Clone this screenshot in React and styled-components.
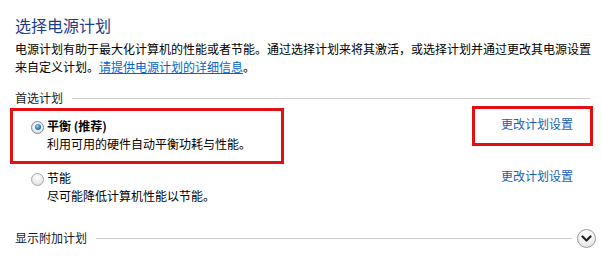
import React from 'react'
import styled, { createGlobalStyle } from 'styled-components'

const GlobalStyle = createGlobalStyle`
  html, body {
    margin: 0;
    background: #ffffff;
  }
  body {
    font-family: "Noto Sans CJK SC", "Noto Sans", sans-serif;
    font-size: 12px;
    color: #000000;
  }
`

const plans = [
  { key: 'balanced', name: '平衡 (推荐)', desc: '利用可用的硬件自动平衡功耗与性能。', selected: true, marked: true },
  { key: 'saver', name: '节能', desc: '尽可能降低计算机性能以节能。', selected: false, marked: false },
]

const App = () => {
  return (
    <Page>
      <GlobalStyle />
      <Title>选择电源计划</Title>
      <Intro>
        电源计划有助于最大化计算机的性能或者节能。通过选择计划来将其激活，或选择计划并通过更改其电源设置来自定义计划。<Link href="#" onClick={e => e.preventDefault()}>请提供电源计划的详细信息</Link>。
      </Intro>

      <GroupHeader>
        <span>首选计划</span>
        <Rule />
      </GroupHeader>

      <PlanList>
        {plans.map(plan => (
          <PlanRow key={plan.key}>
            <Option $marked={plan.marked}>
              <Radio $checked={plan.selected} />
              <PlanName $bold={plan.selected}>{plan.name}</PlanName>
              <PlanDesc>{plan.desc}</PlanDesc>
            </Option>
            <SettingsCell $marked={plan.marked}>
              <PlainLink href="#" onClick={e => e.preventDefault()}>更改计划设置</PlainLink>
            </SettingsCell>
          </PlanRow>
        ))}
      </PlanList>

      <Footer>
        <span>显示附加计划</span>
        <Rule />
        <ExpandButton aria-label="展开">
          <svg width="11" height="8" viewBox="0 0 11 8">
            <path d="M1.5 1.5 L5.5 5.5 L9.5 1.5" fill="none" stroke="#1f1f1f" strokeWidth="2.2" strokeLinecap="round" strokeLinejoin="round" />
          </svg>
        </ExpandButton>
      </Footer>
    </Page>
  )
}

const Page = styled.div`
  width: 602px;
  box-sizing: border-box;
  padding: 15px 12px 0 15px;
`

const Title = styled.h1`
  margin: 0;
  font-size: 16px;
  line-height: 20px;
  font-weight: 400;
  color: #1e3a8a;
`

const Intro = styled.p`
  margin: 5px -8px 0 0;
  line-height: 18px;
  letter-spacing: 0;
`

const Link = styled.a`
  color: #0066cc;
  text-decoration: underline;
`

const PlainLink = styled.a`
  color: #1a5fb4;
  text-decoration: none;
  white-space: nowrap;
`

const GroupHeader = styled.div`
  margin-top: 13px;
  display: flex;
  align-items: center;
  gap: 9px;
  line-height: 18px;
  color: #1a1a1a;
`

const Rule = styled.div`
  flex: 1;
  height: 1px;
  background: #cdcdcd;
`

const PlanList = styled.div`
  margin-top: 4px;
  display: flex;
  flex-direction: column;
  gap: 2px;
`

const PlanRow = styled.div`
  display: flex;
  justify-content: space-between;
  align-items: flex-start;
`

const Option = styled.div`
  margin-left: -2px;
  padding: 6px 30px 8px 18px;
  display: grid;
  grid-template-columns: 13px auto;
  column-gap: 3px;
  align-items: center;
  line-height: 18px;
  outline: ${p => (p.$marked ? '3px solid #e30f12' : 'none')};
`

const Radio = styled.span`
  width: 11px;
  height: 11px;
  border-radius: 50%;
  border: 1px solid ${p => (p.$checked ? '#7a8a99' : '#a9a9a9')};
  background: radial-gradient(circle at 50% 35%, #ffffff 0%, #e9e9e9 60%, #cfcfcf 100%);
  position: relative;
  margin-top: 2px;
  &::after {
    content: '';
    display: ${p => (p.$checked ? 'block' : 'none')};
    position: absolute;
    left: 2.5px;
    top: 2.5px;
    width: 6px;
    height: 6px;
    border-radius: 50%;
    background: radial-gradient(circle at 40% 35%, #8fd0f5 0%, #2f7fb8 55%, #183f66 100%);
  }
`

const PlanName = styled.span`
  font-weight: ${p => (p.$bold ? 700 : 400)};
`

const PlanDesc = styled.span`
  grid-column: 2;
`

const SettingsCell = styled.div`
  margin-top: -2px;
  padding: 6px 17px 10px 26px;
  line-height: 18px;
  outline: ${p => (p.$marked ? '3px solid #e30f12' : 'none')};
`

const Footer = styled.div`
  margin-top: 15px;
  margin-right: -6px;
  height: 20px;
  display: flex;
  align-items: center;
  gap: 9px;
  line-height: 18px;
  color: #1a1a1a;
  ${Rule} {
    margin-right: -4px;
  }
`

const ExpandButton = styled.button`
  width: 19px;
  height: 19px;
  padding: 0;
  border-radius: 50%;
  border: 1px solid #9c9c9c;
  background: radial-gradient(circle at 50% 30%, #ffffff 0%, #f1f1f1 55%, #d6d6d6 100%);
  display: flex;
  align-items: center;
  justify-content: center;
  cursor: pointer;
  svg {
    margin-top: 1px;
  }
`

export default App
